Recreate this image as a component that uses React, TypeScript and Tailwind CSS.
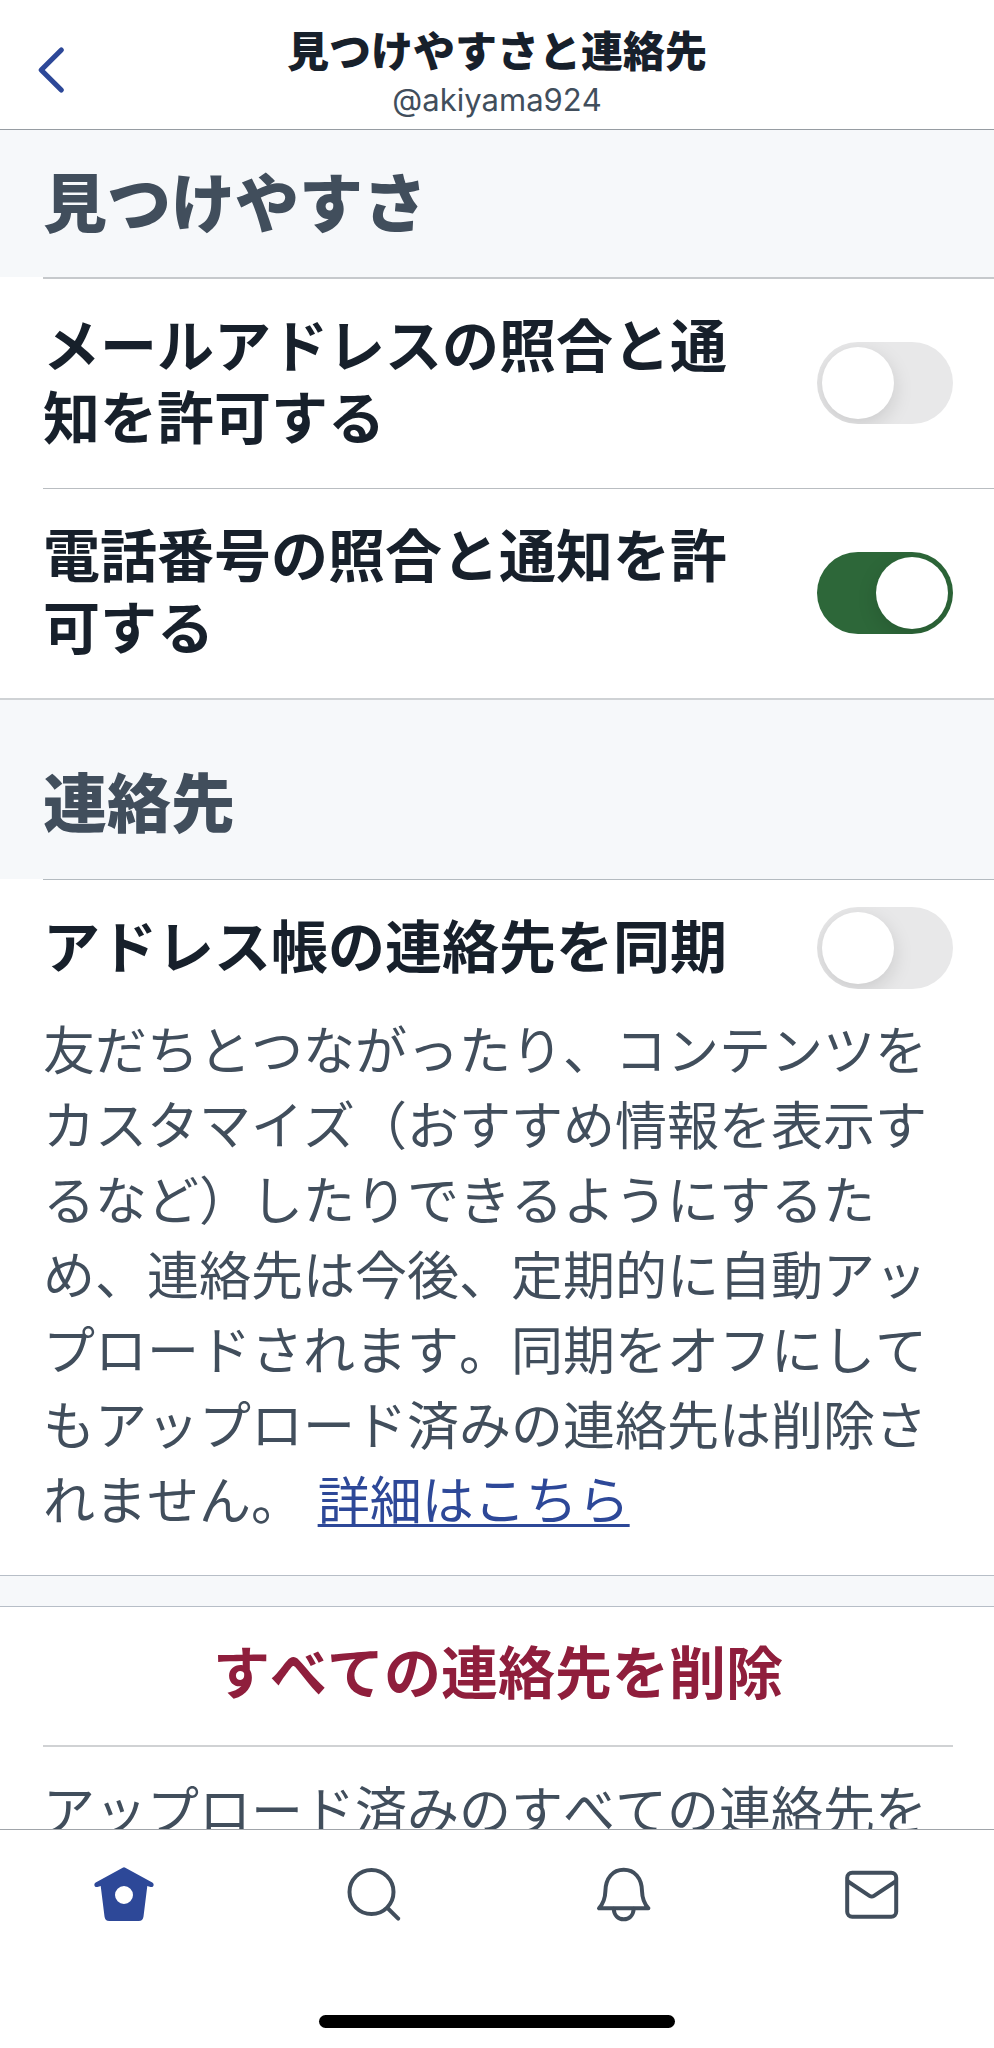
import type { ReactNode } from "react";

type ToggleProps = {
  id: string;
  defaultChecked?: boolean;
};

function Toggle({ id, defaultChecked }: ToggleProps) {
  return (
    <input
      id={id}
      type="checkbox"
      role="switch"
      defaultChecked={defaultChecked}
      className="h-[82px] w-[136px] shrink-0 cursor-pointer appearance-none overflow-hidden rounded-full bg-[#e8e8e9] p-[5px] before:block before:size-[72px] before:rounded-full before:bg-white before:shadow-[0_6px_20px_rgba(0,0,0,0.13)] checked:bg-[#2d6739] checked:before:ml-auto"
    />
  );
}

type SettingRowProps = ToggleProps & {
  label: string;
};

function SettingRow({ id, label, defaultChecked }: SettingRowProps) {
  return (
    <div className="flex items-center justify-between gap-20">
      <label htmlFor={id} className="text-[57px] leading-[72px] font-bold text-[#17202b]">
        {label}
      </label>
      <Toggle id={id} defaultChecked={defaultChecked} />
    </div>
  );
}

function NavItem({ label, active, children }: { label: string; active?: boolean; children: ReactNode }) {
  return (
    <a
      href="#"
      aria-label={label}
      className={active ? "flex justify-center text-[#2d4898]" : "flex justify-center text-[#414e5c]"}
    >
      <svg viewBox="0 0 60 60" className="size-[60px]" fill="none" stroke="currentColor" strokeWidth="4" strokeLinecap="round" strokeLinejoin="round">
        {children}
      </svg>
    </a>
  );
}

export default function App() {
  return (
    <div
      lang="ja"
      className="flex h-screen flex-col bg-white font-['Inter','Noto_Sans_CJK_JP',sans-serif] text-[#414e5c] [font-kerning:none]"
    >
      {/* Header */}
      <header className="grid shrink-0 grid-cols-[100px_1fr_100px] items-center border-b border-[#969ca2] pt-6 pb-[9px]">
        <button type="button" aria-label="戻る" className="flex justify-start pb-1 pl-9 text-[#2d4898]">
          <svg viewBox="0 0 30 50" className="h-[50px] w-[30px]" fill="none" stroke="currentColor" strokeWidth="5.2" strokeLinecap="round" strokeLinejoin="round">
            <path d="M25.300 5 5.200 25l20.100 20" />
          </svg>
        </button>
        <div className="text-center">
          <h1 className="text-[42px] leading-[56px] font-black text-[#17202b]">見つけやすさと連絡先</h1>
          <p className="text-[31px] leading-[40px]">@akiyama924</p>
        </div>
      </header>

      <main className="min-h-0 flex-1 overflow-y-auto [scrollbar-width:none]">
        {/* Discoverability */}
        <section>
          <h2 className="bg-[#f6f8fa] px-[43px] pt-[34px] pb-[33px] text-[64px] leading-[80px] font-black">見つけやすさ</h2>
          <div className="ml-[43px] border-t-2 border-[#c6c9cc] pt-[32px] pr-[41px] pb-[33px]">
            <SettingRow id="match-email" label="メールアドレスの照合と通知を許可する" />
          </div>
          <div className="ml-[43px] border-t border-[#b9bdc1] pt-[32px] pr-[41px] pb-[33px]">
            <SettingRow id="match-phone" label="電話番号の照合と通知を許可する" defaultChecked />
          </div>
        </section>

        {/* Contacts */}
        <section>
          <h2 className="border-t-2 border-[#cfd2d5] bg-[#f6f8fa] px-[43px] pt-[64px] pb-[35px] text-[64px] leading-[80px] font-black">連絡先</h2>
          <div className="ml-[43px] border-t border-[#b4bbc0] pt-[27px] pr-[41px] pb-[36px]">
            <SettingRow id="sync-contacts" label="アドレス帳の連絡先を同期" />
            <p className="mt-[25px] text-[52px] leading-[75px]">
              友だちとつながったり、コンテンツをカスタマイズ（おすすめ情報を表示するなど）したりできるようにするため、連絡先は今後、定期的に自動アップロードされます。同期をオフにしてもアップロード済みの連絡先は削除されません。{" "}
              <a href="#" className="text-[#2d4898] underline decoration-[3px] underline-offset-4">詳細はこちら</a>
            </p>
          </div>
        </section>

        <div className="h-8 border-y border-[#b7bec7] bg-[#f6f8fa]" />

        {/* Delete contacts */}
        <section className="pr-[41px] pl-[43px]">
          <button type="button" className="block w-full cursor-pointer border-b-2 border-[#d0d2d4] pt-[31px] pb-[35px] text-[57px] leading-[72px] font-bold text-[#8f1e3c]">
            すべての連絡先を削除
          </button>
          <p className="pt-[27px] pb-8 text-[52px] leading-[75px]">
            アップロード済みのすべての連絡先を削除します。
          </p>
        </section>
      </main>

      {/* Tab bar */}
      <footer className="shrink-0 border-t border-[#a0a4a9] bg-white pb-5">
        <nav className="grid grid-cols-4 pt-[35px]">
          <NavItem label="ホーム" active>
            <path
              fill="currentColor"
              stroke="none"
              fillRule="evenodd"
              d="M28.700 2.700a2.600 2.600 0 0 1 2.600 0L58.300 17.500c2.600 1.700 1.100 5.300-1.800 4.500l-3.200-1L49.500 51.500c-.4 3-2 4.500-4.800 4.500H15.300c-2.800 0-4.400-1.500-4.800-4.500L6.700 21l-3.200 1C.6 22.800-.9 19.200 1.700 17.500ZM30 21a9 9 0 1 0 0 18 9 9 0 0 0 0-18Z"
            />
          </NavItem>
          <NavItem label="検索">
            <circle cx="28.500" cy="27" r="22" />
            <path d="m45 43.500 10.200 10.200" />
          </NavItem>
          <NavItem label="通知">
            <path d="M8 43.300h49.400c-4.500-5-6.200-9.500-6.400-17.300C50.700 13 43.500 4.800 32.700 4.800S14.700 13 14.400 26C14.200 33.800 12.500 38.300 8 43.300Z" />
            <path d="M22.700 43.800c.5 6.500 4.500 10.500 10 10.500s9.500-4 10-10.500" />
          </NavItem>
          <NavItem label="メッセージ">
            <rect x="7.200" y="7.800" width="49" height="44" rx="5" />
            <path d="m8 16.500 21.500 14.300c1.500 1 2.900 1 4.400 0L55.500 16.500" />
          </NavItem>
        </nav>
        <div className="mx-auto mt-[90px] h-[13px] w-[356px] rounded-full bg-black" />
      </footer>
    </div>
  );
}
